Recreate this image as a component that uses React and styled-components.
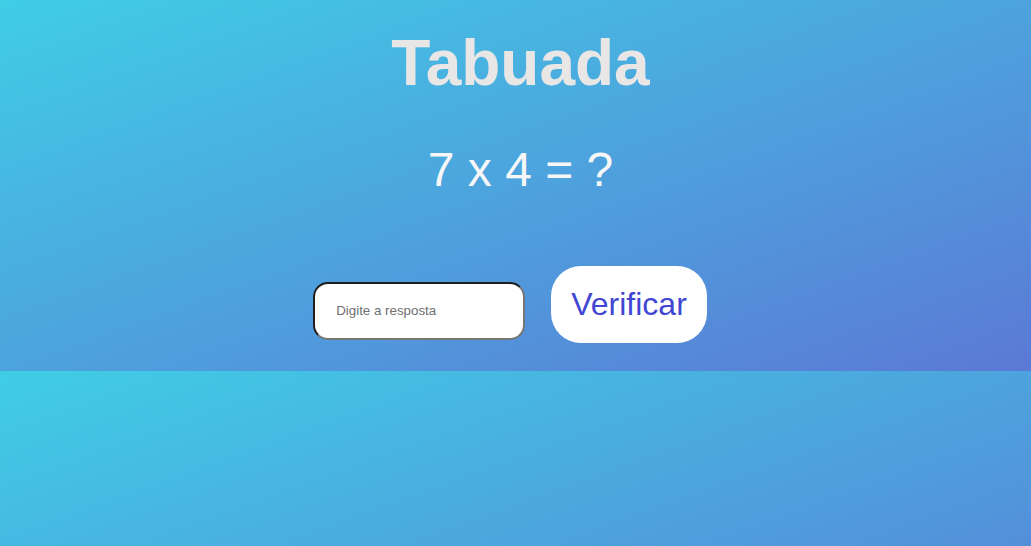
import styled, { createGlobalStyle } from "styled-components"
import { useState } from "react"

const GlobalStyle = createGlobalStyle`
  body {
    margin: 0;
    font-family: "Liberation Sans", Arial, sans-serif;
    background: linear-gradient(to bottom right, #3fcde6, #5b79d5);
  }
`

const Container = styled.div`
  padding: 26px 0 28px 10px;
  display: flex;
  flex-direction: column;
  align-items: center;
`
const Title = styled.h1`
  margin: 0;
  font-size: 64px;
  line-height: 74px;
  font-weight: 700;
  color: #e9e6e6;
`
const Question = styled.p`
  margin: 42px 0 0;
  font-size: 48px;
  line-height: 55px;
  color: #f7f7f7;
`
const AnswerRow = styled.div`
  margin-top: 69px;
  padding-right: 21px;
  display: flex;
  align-items: baseline;
  gap: 26px;
`
const Input = styled.input`
  box-sizing: border-box;
  width: 212px;
  height: 58px;
  padding: 0 21px;
  border: 2px solid;
  border-color: #1e1e1e #767676 #767676 #1e1e1e;
  border-radius: 15px;
  background: #fff;
  font-family: "Liberation Sans", Arial, sans-serif;
  font-size: 13.33px;
  outline: none;
  &::placeholder {
    color: #707070;
  }
`
const Button = styled.button`
  padding: 20px 20px;
  border: none;
  border-radius: 30px;
  background: #fff;
  color: #4146d3;
  font-family: "Liberation Sans", Arial, sans-serif;
  font-size: 32px;
  line-height: 37px;
  cursor: pointer;
`

const App = () => {
  const [resposta, setResposta] = useState("")
  const verificar = () => {
    setResposta("")
  }

  return (
    <Container>
      <GlobalStyle />
      <Title>Tabuada</Title>
      <Question>7 x 4 = ?</Question>
      <AnswerRow>
        <Input
          type="number"
          placeholder="Digite a resposta"
          value={resposta}
          onChange={e => setResposta(e.target.value)}
        />
        <Button onClick={verificar}>Verificar</Button>
      </AnswerRow>
    </Container>
  )
}

export default App
